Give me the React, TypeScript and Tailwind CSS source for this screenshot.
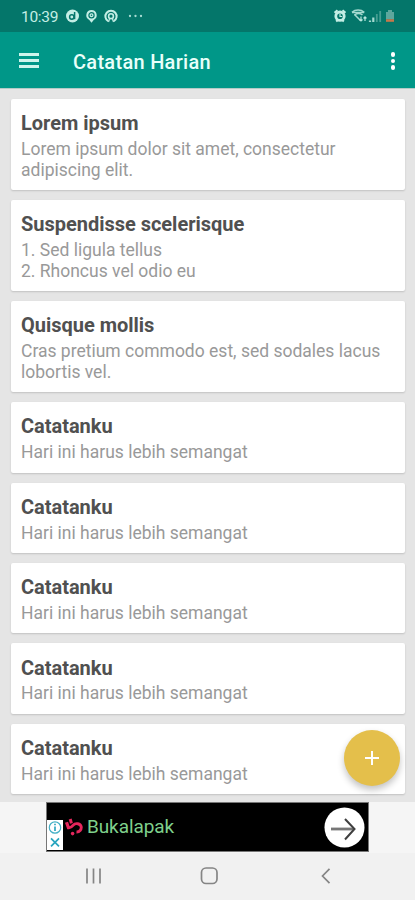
import React from "react";

type Note = { title: string; lines: string[] };

const notes: Note[] = [
  { title: "Lorem ipsum", lines: ["Lorem ipsum dolor sit amet, consectetur", "adipiscing elit."] },
  { title: "Suspendisse scelerisque", lines: ["1. Sed ligula tellus", "2. Rhoncus vel odio eu"] },
  { title: "Quisque mollis", lines: ["Cras pretium commodo est, sed sodales lacus", "lobortis vel."] },
  ...Array.from({ length: 5 }, () => ({ title: "Catatanku", lines: ["Hari ini harus lebih semangat"] })),
];

function StatusBar() {
  return (
    <div className="flex h-8 shrink-0 items-center bg-[#04766a] pr-[20px] pl-[21px] text-[#c4eee5]">
      <span className="w-[45px] pt-[2px] text-[15.5px] leading-5 tracking-[-0.3px]">10:39</span>
      <svg width="80" height="16" viewBox="0 0 80 16" fill="none">
        <circle cx="6.5" cy="8" r="6.5" fill="#c4eee5" />
        <circle cx="5.8" cy="9" r="2.2" stroke="#04766a" strokeWidth="1.5" />
        <path d="M8.6 4v7.2" stroke="#04766a" strokeWidth="1.5" />
        <path d="M25.5 2a5.2 5.2 0 0 0-2.2 9.9l2.2 2.9 2.2-2.9A5.2 5.2 0 0 0 25.5 2z" fill="#c4eee5" />
        <circle cx="25.5" cy="7.2" r="2.6" stroke="#04766a" strokeWidth="1.2" />
        <circle cx="25.5" cy="7.2" r=".8" fill="#04766a" />
        <path d="M42.2 13.2a5.6 5.6 0 1 1 5.6 0" stroke="#c4eee5" strokeWidth="2" />
        <circle cx="45" cy="8.2" r="2.4" stroke="#c4eee5" strokeWidth="1.6" />
        <path d="M42.5 14l1-3M47.5 14l-1-3" stroke="#c4eee5" strokeWidth="1.2" />
        <g fill="#c4eee5" fillOpacity=".85">
          <circle cx="64" cy="8" r="1.15" />
          <circle cx="69.5" cy="8" r="1.15" />
          <circle cx="75" cy="8" r="1.15" />
        </g>
      </svg>
      <svg className="ml-auto" width="62" height="16" viewBox="0 0 62 16" fill="none">
        <path d="M1.5 4.8l3-2.6M9.5 2.2l3 2.6M3.2 13.5l1.5-1.7M10.8 13.5l-1.5-1.7" stroke="#c4eee5" strokeWidth="2" />
        <circle cx="7" cy="8.2" r="4.2" stroke="#c4eee5" strokeWidth="2.8" />
        <path d="M7 5.8v2.7h2.2" stroke="#c4eee5" strokeWidth="1.2" />
        <path d="M19 4.3c3.4-3 8.8-3 12.2 0M21.5 7c2.4-2 5.6-2 8 0" stroke="#a4d9cf" strokeWidth="1.6" />
        <path d="M19 4.5h12.2M21.5 6.5l6 6" stroke="#a4d9cf" strokeWidth="1.5" />
        <path d="M28 8.5v4.5M26.5 11.5L28 13l1.5-1.5M32 13V8.8M30.5 10.3L32 8.8l1.5 1.5" stroke="#b9e7de" strokeWidth="1.2" />
        <path d="M37 14v-1.5M40.3 14v-4.5" stroke="#a4d9cf" strokeWidth="2.2" />
        <path d="M43.8 14V6M47.2 14V3" stroke="#469d92" strokeWidth="1.8" />
        <path d="M53 4h2V2h4v2h2v7.2h-8z" fill="#5da79d" />
        <path d="M53 11.2h8v2.6h-8z" fill="#c7784b" />
      </svg>
    </div>
  );
}

function AppBar() {
  return (
    <header className="flex h-14 shrink-0 items-center bg-[#009788] pr-[20px] pl-[19px] text-white">
      <button aria-label="Menu" className="flex w-[20px] flex-col gap-[3px] pt-px">
        <span className="h-[3px] bg-[#cef5ec]" />
        <span className="h-[3px] bg-[#cef5ec]" />
        <span className="h-[3px] bg-[#cef5ec]" />
      </button>
      <h1 className="ml-[34px] pt-[3px] text-[20px] leading-6 font-medium tracking-[0.29px] text-[#e9fffa]">Catatan Harian</h1>
      <button aria-label="More" className="ml-auto flex flex-col gap-[1.8px] pt-[2px]">
        <span className="size-[4.5px] rounded-full bg-white" />
        <span className="size-[4.5px] rounded-full bg-white" />
        <span className="size-[4.5px] rounded-full bg-white" />
      </button>
    </header>
  );
}

function NoteCard({ note }: { note: Note }) {
  return (
    <article className="rounded-[2px] bg-white px-[10px] pt-[12.2px] pb-[9.8px] shadow-[0_1px_2px_rgba(0,0,0,0.16)]">
      <h2 className="text-[20px] leading-6 font-bold tracking-[-0.02px] text-[#505050]">{note.title}</h2>
      <div className="mt-[3.8px] text-[17.5px] leading-[20.7px] whitespace-nowrap text-[#999]">
        {note.lines.map((line) => (
          <p key={line}>{line}</p>
        ))}
      </div>
    </article>
  );
}

function AdBanner() {
  return (
    <div className="flex h-[51px] shrink-0 justify-center bg-[#f5f5f5]">
      <div className="flex h-[50px] w-[323px] items-center border border-[#777] bg-black pr-[3px]">
        <svg className="mb-px self-end" width="16" height="30" viewBox="0 0 16 30" fill="none">
          <path d="M0 0h16v30H0z" fill="#fff" />
          <circle cx="8" cy="7.5" r="5.7" stroke="#42afc5" strokeWidth="1.2" />
          <path d="M8 6.5v4.5M8 3.8v1.5" stroke="#22a0bc" strokeWidth="1.6" />
          <path d="M4 18.3l8 8M12 18.3l-8 8" stroke="#28a5bf" strokeWidth="1.7" />
        </svg>
        <svg className="ml-[2px]" width="18" height="18" viewBox="0 0 18 18" fill="none" stroke="#e5265c">
          <path d="M1.5 4.2l2.3 6.6" strokeWidth="3.2" />
          <path d="M5.2 1l1.2 4.4" strokeWidth="3" />
          <path d="M2.6 9.6c2.6.9 4-.5 5.4-2.200 2.600-3 7.600-1.900 8.200 1.400.4 3-1.700 5.300-4.700 5.200" strokeWidth="2.9" />
          <circle cx="7.6" cy="15.6" r="1.8" fill="#e5265c" stroke="none" />
        </svg>
        <span className="ml-[4px] pb-px text-[19px] leading-6 tracking-[-0.1px] text-[#7fd08c]">Bukalapak</span>
        <svg className="ml-auto" width="41" height="41" viewBox="0 0 41 41" fill="none">
          <circle cx="20.5" cy="20.5" r="20" fill="#fff" />
          <path d="M7 22h23" stroke="#777" strokeWidth="2.8" />
          <path d="M21 12l9.5 10L21 32.5" stroke="#3f3f3f" strokeWidth="2" />
        </svg>
      </div>
    </div>
  );
}

function NavigationBar() {
  return (
    <nav className="flex flex-1 bg-[#f1f1f1]">
      <svg width="415" height="47" viewBox="0 0 415 47" fill="none" stroke="#858585" strokeWidth="1.7">
        <path d="M87 15.5v15M93.5 15.5v15M100 15.5v15" />
        <rect x="201.5" y="15" width="15.5" height="15.5" rx="4.5" />
        <path d="M329.5 15.8l-7 7.2 7 7.2" />
      </svg>
    </nav>
  );
}

export default function App() {
  return (
    <div className="flex h-[900px] w-[415px] flex-col overflow-hidden bg-[#e5e5e5] font-['Roboto',sans-serif]">
      <StatusBar />
      <AppBar />
      <main className="relative flex h-[714px] shrink-0 flex-col gap-[9.9px] border-t border-[#b3cbc7] pt-[10px] pr-[10px] pl-[11px]">
        {notes.map((note, i) => (
          <NoteCard key={i} note={note} />
        ))}
        <button
          aria-label="Add"
          className="absolute right-[15px] bottom-[16px] grid size-[56px] place-items-center rounded-full bg-[#e4bf4b] shadow-[0_4px_7px_rgba(0,0,0,0.24)]"
        >
          <svg width="14" height="14" viewBox="0 0 14 14" stroke="#fff" strokeWidth="2">
            <path d="M7 0v14M0 7h14" />
          </svg>
        </button>
      </main>
      <AdBanner />
      <NavigationBar />
    </div>
  );
}
